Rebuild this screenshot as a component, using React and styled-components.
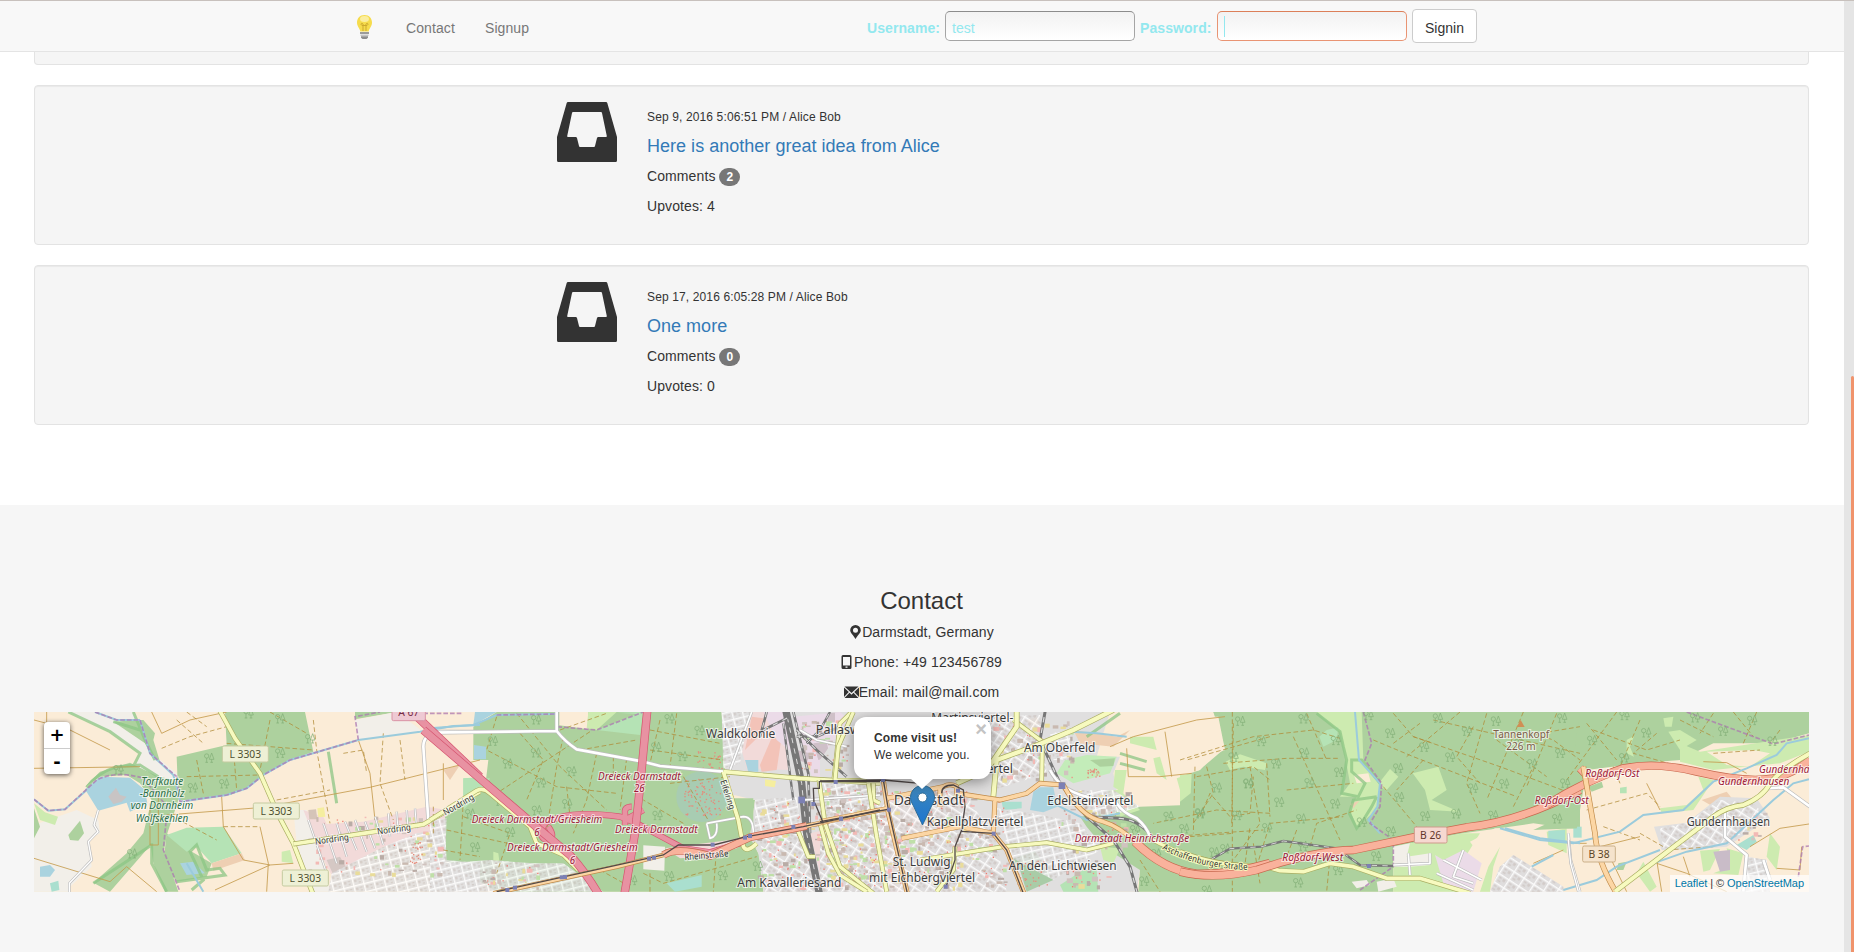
import React from 'react';
import styled, { createGlobalStyle, css } from 'styled-components';

const sans = '"Liberation Sans", Arial, sans-serif';

const GlobalStyle = createGlobalStyle`
  *, *::before, *::after { box-sizing: border-box; }
  body { margin: 0; overflow: hidden; background: #fff; }
  p, h3, h4 { margin: 0; font-weight: 400; }
`;

const Window = styled.div`
  display: flex;
  height: 952px;
  border-top: 1px solid #c8c1bd;
  font: 14px/20px ${sans};
  color: #333;
  overflow: hidden;
`;
const Page = styled.div`
  flex: 1;
  min-width: 0;
  display: flex;
  flex-direction: column;
`;
const ScrollTrack = styled.div`
  width: 10px;
  background: #e5e5e5;
  display: flex;
  flex-direction: column;
  align-items: flex-end;
  justify-content: flex-end;
`;
const ScrollThumb = styled.div`
  width: 3px;
  height: 576px;
  border-radius: 2px 2px 0 0;
  background: #f0936c;
`;

const Navbar = styled.nav`
  height: 51px;
  flex: none;
  background: #f8f8f8;
  border-bottom: 1px solid #e4e4e4;
  display: flex;
  align-items: center;
  padding: 0 367px 0 355px;
`;
const Brand = styled.a`
  display: flex;
  width: 36px;
  padding-top: 3px;
`;
const NavLink = styled.a`
  padding: 3px 15px 0;
  color: #777;
  letter-spacing: 0.1px;
`;
const LoginForm = styled.form`
  margin-left: auto;
  display: flex;
  align-items: center;
`;
const FieldLabel = styled.label`
  width: ${p => p.$width}px;
  padding-top: 3px;
  font-weight: 700;
  letter-spacing: 0.08px;
  color: #93e8ef;
  white-space: nowrap;
`;
const Field = styled.div`
  width: 190px;
  height: 30px;
  margin-right: 5px;
  padding: 6px 6px 0;
  border: 1px solid ${p => (p.$focused ? '#e99473' : '#a5a5a5')};
  border-top-color: ${p => (p.$focused ? '#dc7f59' : '#8c8c8c')};
  border-radius: 5px;
  background: linear-gradient(#f2f2f2, #fff);
  color: #93e8ef;
`;
const Caret = styled.span`
  display: block;
  width: 1px;
  height: 21px;
  margin-top: -2px;
  background: #93e8ef;
`;
const SubmitButton = styled.button`
  width: 65px;
  height: 34px;
  padding: 3px 0 0;
  border: 1px solid #ccc;
  border-radius: 4px;
  background: #fff;
  font: 14px/20px ${sans};
  color: #333;
`;

const Ideas = styled.main`
  height: 453px;
  flex: none;
  padding: 0 35px 0 34px;
`;
const Well = styled.article`
  height: 160px;
  margin-bottom: 20px;
  padding: 16px 19px 0 522px;
  display: flex;
  gap: 30px;
  background: #f5f5f5;
  border: 1px solid #e3e3e3;
  border-radius: 4px;
  box-shadow: inset 0 1px 1px rgba(0, 0, 0, 0.05);
  ${p => p.$cut && css`
    height: 13px;
    padding: 0;
    border-top: 0;
    border-radius: 0 0 4px 4px;
    box-shadow: none;
  `}
`;
const IdeaBody = styled.div`
  display: flex;
  flex-direction: column;
  gap: 10px;
  padding-top: 5px;
  letter-spacing: 0.1px;
`;
const Meta = styled.p`
  font-size: 12px;
  letter-spacing: 0.13px;
`;
const IdeaTitle = styled.h4`
  font-size: 18px;
  line-height: 20px;
  margin-top: -1px;
  letter-spacing: 0.02px;
  color: #337ab7;
`;
const Badge = styled.span`
  display: inline-block;
  min-width: 10px;
  padding: 3px 7px;
  border-radius: 10px;
  background: #777;
  color: #fff;
  font-size: 12px;
  line-height: 12px;
  font-weight: 700;
  vertical-align: middle;
`;

const ContactSection = styled.section`
  flex: 1;
  padding: 83px 35px 0 34px;
  background: #f6f6f6;
  text-align: center;
`;
const ContactTitle = styled.h3`
  font-size: 24px;
  line-height: 26px;
  margin-bottom: 8px;
`;
const ContactLine = styled.p`
  display: flex;
  justify-content: center;
  align-items: center;
  height: 20px;
  margin-bottom: 10px;
  letter-spacing: 0.1px;
  svg { margin-top: -1px; }
`;

const MapFrame = styled.div`
  position: relative;
  height: 180px;
  overflow: hidden;
  background: #fbecd7;
  text-align: left;
`;
const MapDrawing = styled.svg`
  display: block;
  font-family: "Noto Sans", sans-serif;
`;
const ZoomControl = styled.div`
  position: absolute;
  left: 10px;
  top: 10px;
  border-radius: 4px;
  background: #fff;
  box-shadow: 0 1px 5px rgba(0, 0, 0, 0.65);
`;
const ZoomButton = styled.div`
  width: 26px;
  height: 26px;
  font: bold 18px/25px "DejaVu Sans", sans-serif;
  text-align: center;
  color: #000;
  & + & { border-top: 1px solid #ccc; }
`;
const Popup = styled.div`
  position: absolute;
  left: 820px;
  top: 5px;
  width: 137px;
  height: 62px;
  padding: 13px 20px;
  border-radius: 12px;
  background: #fff;
  box-shadow: 0 3px 14px rgba(0, 0, 0, 0.4);
  font-size: 12px;
  line-height: 17px;
  letter-spacing: 0.08px;
  white-space: nowrap;
  &::after {
    content: '';
    position: absolute;
    left: 56px;
    top: 61px;
    border: 12px solid transparent;
    border-top: 11px solid #fff;
    border-bottom: 0;
  }
`;
const PopupClose = styled.span`
  position: absolute;
  right: 4px;
  top: 5px;
  font: bold 20px/14px "Liberation Sans", sans-serif;
  color: #c3c3c3;
`;
const MarkerPin = styled.svg`
  position: absolute;
  left: 876px;
  top: 73px;
`;
const Attribution = styled.div`
  position: absolute;
  right: 0;
  bottom: 0;
  height: 17px;
  padding: 0 5px;
  background: rgba(255, 255, 255, 0.7);
  font-size: 11px;
  line-height: 17px;
  letter-spacing: -0.06px;
  white-space: nowrap;
  a { color: #0078a8; }
`;

const Bulb = () => (
  <svg width="22" height="27" viewBox="0 0 22 27">
    <path d="M9.500 1C4.700 1 2 4.500 2 8.500c0 4 2.700 5.500 3.300 9h8.400c.6-3.500 3.300-5 3.300-9C17 4.500 14.300 1 9.500 1z" fill="#f6dc4d" />
    <ellipse cx="9.500" cy="5" rx="4.500" ry="3" fill="#fbeea0" />
    <path d="M8 17V11.500m3 5.500v-5.500M8 11.500c-3 0-2-3-.5-2 1 .8.500 2 .5 2h3s-.5-1.200.5-2c1.500-1 2.500 2-.5 2" fill="none" stroke="#cda92e" strokeWidth="1" />
    <path d="M5 18h9v2H5z" fill="#9b9b9b" />
    <path d="M5.500 20.500h8v1.500h-8z" fill="#c4c4c4" />
    <path d="M6 22.300h7v1.400l-1.500 1.200h-4L6 23.700z" fill="#8d8d8d" />
  </svg>
);
const Inbox = () => (
  <svg width="60" height="60" viewBox="0 0 60 60">
    <path fillRule="evenodd" fill="#333" d="M11 0H49Q50 0 50.300 1L60 35V58.500Q60 60 58.500 60H1.500Q0 60 0 58.500V35L9.700 1Q10 0 11 0zM16 10Q15.200 10 15 11L10.200 34Q10 35 11 35H18.500Q19.800 35 20 36L22 44Q22.200 45 23 45H37Q37.800 45 38 44L40 36Q40.200 35 41.500 35H49Q50 35 49.800 34L45 11Q44.800 10 44 10z" />
  </svg>
);
const PinIcon = () => (
  <svg width="13" height="14" viewBox="0 0 13 14"><path fillRule="evenodd" fill="#333" d="M6.500 0a5.300 5.300 0 0 1 5.300 5.300c0 3-3.300 5-5.300 8.700C4.500 10.300 1.200 8.300 1.200 5.300A5.300 5.300 0 0 1 6.500 0zm0 2.700a2.500 2.500 0 1 0 0 5 2.500 2.500 0 0 0 0-5z" /></svg>
);
const PhoneIcon = () => (
  <svg width="13" height="14" viewBox="0 0 13 14"><path fillRule="evenodd" fill="#333" d="M2 0h7q1.500 0 1.500 1.500v11Q10.500 14 9 14H2Q.5 14 .5 12.500v-11Q.5 0 2 0zm0 2v8.500h7V2zm2.500 9.500v1.300h2v-1.300z" /></svg>
);
const MailIcon = () => (
  <svg width="15" height="14" viewBox="0 0 15 14"><path fill="#333" d="M.5 1.500h14L7.500 8zM0 2.500l4.800 4.600L0 12zM15 2.500v9.500l-4.800-4.900zM.5 13l5-5.200 2 1.900 2-1.900 5 5.200z" /></svg>
);

/* The map is surveyed in five sheets drawn at three times the map scale. */
const sheets = { a: [-4, -12], b: [396, -12], c: [786, -152], d: [1146, -12], e: [1446, -12] };
const Sheet = ({ id, children }) => (
  <g transform={`translate(${sheets[id].join(' ')}) scale(.333333)`}>{children}</g>
);

const wood = '#add19e', meadow = '#cdebb0', built = '#e0dfdf', field = '#fbecd7', plain = '#f2efe9', water = '#aad3df', mint = '#b5e3b5', pink = '#f2dad9', lilac = '#ebdbe8', soil = '#eecfb3';
const areas = [
  ['a', plain, '110,36 310,36 380,170 440,220 450,300 420,330 330,250 320,190 330,160 240,95'],
  ['a', wood, '585,36 825,36 850,155 780,180 700,225 650,265 600,285 470,300 445,300 440,170 590,135'],
  ['a', wood, '250,65 320,60 340,60 375,100 370,120 390,185 375,180 345,130'],
  ['a', wood, '975,36 1100,36 975,58'],
  ['a', plain, '975,60 1100,36 1180,95 985,120'],
  ['a', plain, '12,375 140,330 205,360 210,400 175,420 185,500 120,560 120,575 12,575'],
  ['a', wood, '165,260 210,215 300,188 385,230 440,240 445,300 412,400 402,450 445,575 405,575 370,490 362,435 240,575 190,548 290,460 340,400 365,300 330,250 290,225 210,230'],
  ['a', water, '165,268 210,230 300,233 345,270 352,310 300,335 290,308 205,332'],
  ['a', '#c8c4c4', '235,290 245,278 258,263 270,285 290,290 275,305 250,312'],
  ['a', meadow, '12,310 45,337 84,350 75,375 30,360'],
  ['a', wood, '115,405 150,362 162,400 145,422 120,420'],
  ['a', wood, '12,325 30,380 12,415'],
  ['a', water, '30,500 60,495 75,510 60,530 30,530'],
  ['a', '#aadfcf', '60,550 85,542 88,570 65,575'],
  ['a', wood, '410,400 460,440 545,490 530,530 440,545 400,490'],
  ['a', mint, '410,405 470,383 580,380 635,460 545,490 500,440 470,455'],
  ['a', soil, '545,490 635,460 645,480 550,512'],
  ['a', water, '450,490 490,485 525,520 470,525'],
  ['a', plain, '790,330 830,330 880,480 900,575 850,575 800,430'],
  ['a', meadow, '755,455 780,450 790,490 755,485'],
  ['a', pink, '820,330 880,350 890,372 1000,365 1190,320 1250,330 1240,400 1060,440 905,525 880,480'],
  ['a', '#d5c4b8', '835,330 858,328 862,358 838,358'],
  ['a', '#f5ee9f', '862,325 882,322 886,350 865,352'],
  ['a', '#d5c8c4', '890,480 930,470 950,505 910,525'],
  ['a', mint, '1300,235 1350,232 1350,270 1300,300'],
  ['a', wood, '1240,400 1260,360 1350,300 1350,478 1250,485'],
  ['a', soil, '1240,210 1290,195 1260,240'],
  ['b', wood, '45,350 165,265 175,180 130,180 130,80 200,36 470,36 640,36 875,36 885,215 905,300 975,300 960,410 990,470 1000,575 200,575 45,480'],
  ['b', water, '135,36 200,36 130,75'], ['b', water, '132,135 168,140 168,178 132,178'],
  ['b', mint, '100,235 180,235 165,265 100,330'],
  ['b', field, '388,36 475,36 475,88 388,76'], ['b', meadow, '475,36 560,36 500,90 470,85'], ['b', mint, '560,38 640,36 630,105 500,90 620,42'],
  ['b', built, '875,36 1350,36 1350,575 1000,575 985,460 960,410 975,300 890,280'],
  ['b', wood, '905,295 970,295 970,370 925,360'],
  ['b', pink, '965,36 1060,36 1080,210 950,205 935,150'],
  ['b', '#f3c3b8', '965,50 1000,55 985,110 945,150'],
  ['b', '#f3c3b8', '990,195 1035,90 1055,110 1040,210 995,215'],
  ['b', lilac, '1090,50 1230,36 1270,70 1270,230 1150,240 1120,160'],
  ['b', lilac, '1000,36 1070,36 1090,160 1040,120'],
  ['b', '#cfc0c8', '1150,130 1190,125 1200,170 1165,180'], ['b', '#cfc0c8', '1190,40 1215,38 1215,65 1195,70'], ['b', '#cfc0c8', '1100,150 1140,160 1130,190 1105,180'],
  ['b', water, '945,180 985,180 985,215 955,215'],
  ['b', '#f5ee9f', '1005,238 1038,243 1034,262 1005,258'],
  ['b', pink, '1140,400 1350,350 1350,420 1230,500 1170,520'],
  ['b', pink, '705,445 900,420 980,400 920,445 830,470 750,475'],
  ['b', plain, '640,436 705,440 703,512 640,508'],
  ['b', '#aadfcf', '710,550 815,525 815,560 735,575'],
  ['b', meadow, '190,455 205,460 210,500 238,510 232,530 190,515'],
  ['c', built, '100,456 870,456 900,590 960,740 830,780 900,860 960,930 950,995 0,995 0,600'],
  ['c', pink, '0,790 200,755 250,995 180,995 160,800 30,830'],
  ['c', pink, '200,700 420,690 410,800 250,830'],
  ['c', '#d9cfcd', '330,700 430,690 425,780 320,780'],
  ['c', field, '870,456 1180,456 1215,560 1140,640 1000,740 900,740 880,640 900,590 830,590 850,520'],
  ['c', soil, '760,510 890,530 930,510 880,560 780,550'],
  ['c', soil, '620,480 650,470 660,490 630,510'],
  ['c', '#c3ecb9', '735,600 800,585 890,590 870,640 760,670 710,640'],
  ['c', wood, '810,600 885,595 880,618 840,620'],
  ['c', meadow, '885,630 920,630 910,700 880,680'], ['c', meadow, '1000,595 1020,590 1040,660 1010,640'],
  ['c', meadow, '930,530 1000,530 1010,570 930,550'],
  ['c', wood, '1180,456 1350,456 1350,995 955,995 960,930 850,860 800,800 780,770 960,740 1100,735 1120,650 1150,620 1215,565'],
  ['c', meadow, '860,690 900,690 960,750 900,770'],
  ['c', meadow, '840,860 900,865 880,910 850,900'],
  ['c', '#aadfcf', '545,725 605,725 605,745 550,750'],
  ['c', '#a9cca7', '580,895 645,873 700,960 620,995 600,930'],
  ['c', mint, '720,975 790,930 830,930 835,995 730,995'],
  ['c', meadow, '1070,655 1115,640 1115,700 1090,725'],
  ['c', meadow, '1215,590 1340,610 1320,630 1240,620'],
  ['d', wood, '100,36 1200,36 1200,390 1060,370 850,400 640,440 640,575 0,575 0,230 60,210 135,150 115,50'],
  ['d', field, '0,50 115,50 135,150 95,165 60,210 0,225'],
  ['d', meadow, '0,225 35,222 32,280 0,305'],
  ['d', meadow, '410,36 545,36 550,180 600,250 590,330 530,380 510,330 530,290 480,290 510,250 490,140 480,95'],
  ['d', mint, '418,110 440,90 475,82 470,120 430,140'],
  ['d', meadow, '137,185 180,163 260,190 255,210 190,200 150,210'],
  ['d', meadow, '603,262 600,245 630,207 655,230 620,270'],
  ['d', meadow, '698,220 775,200 800,270 755,300 838,335 750,330 735,270'],
  ['d', field, '522,225 565,220 572,245 530,250'], ['d', soil, '510,312 538,302 520,325'],
  ['d', meadow, '640,440 850,400 900,400 850,480 870,575 640,575'],
  ['d', plain, '640,440 690,430 680,470 750,460 750,495 690,500 640,500'],
  ['d', plain, '515,545 560,540 570,555 530,565'], ['d', plain, '590,545 640,535 650,560 595,575'],
  ['d', lilac, '765,465 790,480 850,450 905,490 880,575 840,575 790,550'],
  ['d', field, '870,425 945,385 1200,385 1200,575 900,575 925,500'],
  ['d', meadow, '925,500 960,440 940,500 930,575 900,575'],
  ['d', built, '960,500 1000,465 1150,560 1150,575 930,575'],
  ['d', meadow, '1105,435 1100,395 1160,385 1160,460'],
  ['d', '#aadfcf', '1105,392 1155,390 1155,425 1105,420'], ['d', '#aadfcf', '1180,380 1205,380 1205,413 1180,413'],
  ['e', wood, '300,36 987,36 987,100 880,130 700,130 600,180 480,190 320,210 300,330 290,385 250,385'],
  ['e', wood, '160,390 300,325 290,385'],
  ['e', meadow, '600,130 660,155 987,105 987,155 900,190 700,210 600,185'],
  ['e', meadow, '550,55 580,50 575,80 555,80'], ['e', meadow, '440,120 462,108 450,140 462,170 440,160'],
  ['e', meadow, '565,95 600,90 650,120 600,150'],
  ['e', field, '680,155 820,150 870,160 810,200 740,195'],
  ['e', meadow, '655,230 700,240 640,330 545,340 540,325 620,315 670,270'],
  ['e', wood, '325,260 365,245 370,262 335,275'], ['e', mint, '420,263 440,260 440,280 420,280'],
  ['e', soil, '665,300 740,275 760,300 700,320'],
  ['e', built, '522,380 620,368 720,290 830,295 870,355 740,440 640,448 545,450'],
  ['e', built, '800,470 860,480 870,575 780,575'],
  ['e', meadow, '660,452 720,447 690,510 670,515'],
  ['e', meadow, '740,445 790,460 775,525 700,520 750,500'], ['e', meadow, '870,400 900,440 890,510 860,470'],
  ['e', '#c9bcc8', '700,455 750,450 750,510 720,515'],
  ['e', '#aadfcf', '770,435 820,405 830,425 800,450'],
  ['e', wood, '415,490 440,485 430,510 410,510'],
  ['e', meadow, '470,520 490,485 530,560 510,575'],
];

const streetZones = [
  ['a', 'url(#blocks)', '905,520 1060,440 1160,400 1245,390 1250,480 1350,490 1350,575 895,575'],
  ['b', 'url(#blocks)', '0,360 50,355 45,490 180,480 310,490 400,490 520,575 0,575'],
  ['b', 'url(#blocks)', '875,36 960,36 930,190 880,205'],
  ['b', 'url(#blocks)', '975,300 1100,290 1110,370 975,395'],
  ['b', 'url(#blocks2)', '990,410 1120,390 1170,575 1005,575'],
  ['b', 'url(#blocks)', '1170,250 1350,250 1350,575 1190,575'],
  ['c', 'url(#blocks2)', '510,470 660,465 680,640 520,690 515,600'],
  ['c', 'url(#blocks)', '690,520 760,510 750,600 700,600'],
  ['c', 'url(#blocks2)', '0,760 430,690 530,850 560,995 0,995'],
  ['c', 'url(#blocks)', '530,745 640,760 780,790 840,870 700,960 570,890'],
  ['c', 'url(#blocks)', '750,690 880,690 960,740 830,780'],
  ['d', 'url(#blocks2)', '960,500 1000,465 1150,560 1150,575 930,575'],
  ['e', 'url(#blocks2)', '540,385 620,368 720,300 820,310 860,350 740,430 640,440 550,445'],
  ['e', 'url(#blocks)', '800,470 860,480 870,575 780,575'],
];

const styles = {
  motorway: ['#d6546f', '#e892a2'], trunk: ['#c8694f', '#f9b29c'], primary: ['#c08b4a', '#fcd6a4'], secondary: ['#a9ad62', '#f7fabf'], minor: ['#bdbdbd', '#ffffff'],
};
const roads = [
  ['a', 'minor', 9, 'M1350 95H1230Q1180 100 1180 140L1195 360'], ['a', 'minor', 5, 'M205 330L192 375L204 395L175 425L185 480L118 550V580'],
  ['a', 'minor', 4, 'M835 360L890 520M880 370L920 490M920 370L950 470M945 365L980 450M975 360L1010 455M1005 365L1035 445M1035 350L1060 435M1075 340L1080 410M1100 335L1105 400M1130 330L1135 395M1155 325L1160 385'],
  ['b', 'minor', 9, 'M0 98L380 93Q405 125 440 148L640 185L690 198L880 215M380 93V36'],
  ['b', 'minor', 6, 'M830 370L940 350Q970 350 970 400M830 370L840 415Q865 410 860 370M965 36L900 210M1110 90L1160 120L1250 140M1120 300L1350 285'],
  ['c', 'minor', 9, 'M690 630Q720 690 800 710L890 730Q910 760 950 775Q980 800 990 830'],
  ['d', 'minor', 6, 'M640 495L750 490V460M685 460L690 525M1165 400L1172 480L1200 575M790 480L905 540M770 520L880 570M850 450L820 530L880 550'],
  ['e', 'minor', 9, 'M860 265L910 262L990 320M735 330L735 410L800 465L790 575M850 480L870 540'],
  ['e', 'minor', 5, 'M265 420L272 490L295 575'],
  ['a', 'secondary', 12, 'M565 24L615 115L690 220L745 345L790 430L850 585'], ['a', 'secondary', 12, 'M790 432L1000 400L1180 373L1350 275'],
  ['b', 'secondary', 12, 'M0 360L140 272Q160 262 180 280L300 380L320 430L400 465L445 510'],
  ['b', 'secondary', 12, 'M880 215L1110 235L1350 250M880 215L925 360L940 440Q950 460 980 430'],
  ['b', 'secondary', 11, 'M1265 36L1230 70L1212 235M1167 240L1185 370L1230 500L1330 580M1105 395L1135 470L1155 470M1330 250V300L1350 310'],
  ['c', 'secondary', 11, 'M300 900L550 860L680 848L800 870L880 850M665 665L667 545L580 480M145 670L170 830L200 995M0 790L25 880L60 945L140 995M100 456L55 560L45 660L140 662M405 860L400 930L350 995'],
  ['c', 'secondary', 14, 'M520 710L530 600L640 560L760 510L880 450M410 670L500 630L590 500L590 456'],
  ['c', 'secondary', 10, 'M990 835Q1050 870 1120 890Q1230 920 1350 920'],
  ['d', 'secondary', 12, 'M0 455Q130 505 240 495L300 512L370 515L450 490L520 500L620 535L720 535L870 580'],
  ['a', 'motorway', 22, 'M1140 30L1350 230'],
  ['b', 'motorway', 16, 'M330 380Q400 325 570 350L620 370L760 445L840 457L930 430M640 330L585 360M585 375V340Q582 320 605 320M345 370Q320 410 350 420Q380 415 355 380'],
  ['b', 'trunk', 20, 'M700 465Q740 440 840 468L960 412L1130 378'],
  ['b', 'motorway', 22, 'M-20 90L330 390L420 465Q470 520 510 590'], ['b', 'motorway', 22, 'M652 30L630 260L615 400L582 590'],
  ['b', 'primary', 11, 'M190 580L560 500L700 465M1130 378L1350 330'],
  ['c', 'primary', 12, 'M0 785L205 745M190 660L205 760L262 1000M200 715L370 680Q390 668 410 680V700L540 720L620 700L660 670L730 675Q780 770 850 785Q900 800 950 850M525 715L520 820L560 870L612 1000M245 835L420 800L520 820M360 680V740'],
  ['c', 'trunk', 24, 'M945 845Q1030 930 1130 942Q1230 945 1350 910'],
  ['d', 'trunk', 22, 'M0 515Q100 540 230 510L300 488Q430 452 520 450L700 412L860 382Q1020 365 1200 270'],
  ['e', 'trunk', 22, 'M200 315Q320 240 430 205Q530 185 650 215Q800 250 880 235Q940 220 990 180M320 225L300 205'],
  ['e', 'primary', 14, 'M310 200L345 400Q350 480 410 580'],
  ['e', 'secondary', 13, 'M405 575L700 350Q740 320 790 315Q850 290 870 250Q900 210 990 160'],
];

const streams = [
  ['a', 'M12 298L55 332L105 328L170 270M330 60L360 160L430 225L450 300M450 305L590 285L650 265L700 225L780 180L985 120L1170 95L1270 78L1350 75M470 490L520 575M195 36L260 60L330 60'],
  ['b', 'M0 85L130 75L200 45L380 42'],
  ['d', 'M525 36L537 180L600 250L592 320L565 360L600 400M975 385L1080 415L1200 430M1055 500L1120 465'],
  ['e', 'M60 385L180 420L280 430L420 395L490 345L610 330L700 245L800 205L890 165L920 130L987 115M250 570L350 540L410 500L540 450M520 490L620 455L740 430L880 300L940 250L987 238'],
  ['c', 'M755 515L830 520L920 530M700 730L800 780L900 760'],
];
const hedges = [
  ['a', 'M115 36L240 95L330 160L312 195M310 36L345 120L375 180M250 65L330 90M170 262Q200 220 260 200L330 195L385 230M365 430V490L410 575M190 550L365 435M440 545L585 525L570 505L530 510L500 435L480 455L520 540L485 570M895 155L920 310'],
  ['c', 'M900 580L980 605M900 610L975 630M800 530L900 460'],
  ['d', 'M410 40L480 95L490 140L500 180L485 280L535 290L555 250L515 215V180H545L600 250M590 290L520 300L508 340L530 385L550 360L575 320L590 290'],
];
const farmTracks = [
  ['a', 'M12 205L330 200M50 36V70L12 60M365 36L395 100L480 60L590 36M12 475L240 545L290 500L380 575M575 290L580 380L640 480L720 495L790 490M410 345L700 322L1020 262L1350 180M985 120L1020 220L1035 360M1240 190V300M555 570L720 495M690 380L715 490L710 575M110 85L240 150M360 310V435H385V290'],
  ['c', 'M870 560L940 530L1130 480L1215 470M1035 515L1055 650M920 565L925 650L1020 650L1115 640'],
  ['e', 'M500 250L540 330M280 430H320M530 490L620 520L740 575M320 450L480 410M610 470L630 530M810 440L900 385L987 372M670 185L740 188L800 220M160 490L250 450M380 450L440 575M890 505L960 510L965 440M530 480L545 575'],
];
const paths = [
  ['a', 'M395 145L480 110L590 80M440 60L520 130M470 36L530 80M590 130L850 150M470 230L690 225M500 180L520 280M610 140L620 270M720 60L690 210M720 36L830 100M850 60L860 150L900 370M1060 100L1050 250L1090 360M1110 120L1125 240M740 300L900 270M940 160L1000 150L1010 220M420 345L560 420M580 380L690 380M1210 320V400'],
  ['b', 'M260 40L390 200L530 330M480 95L200 280M200 50L170 150L380 260L560 280M400 110L380 200L350 390M500 160L470 300L430 400M590 175L570 330M270 100L340 180L290 300M100 350L240 400L200 520M50 390L280 440M100 300L90 480M390 90L530 40M690 60L660 190M740 40L720 200M660 90L870 130M660 150L880 180M760 230L840 370M760 370L640 300M720 250L900 230M640 520L700 550L980 470M860 440L850 575M660 575L660 520M550 170L550 240M450 150L620 120M510 510L600 560M410 260L420 350M40 450L150 470'],
  ['d', 'M157 36V575M0 180L220 110L400 90L480 115M45 200L40 400M130 190L320 175H480M60 350L90 280L150 350L210 340L220 230M260 190L270 350M340 110L480 420M380 40L440 180M320 270L520 250M230 500L270 370L490 350M390 440L410 370L530 330M30 410L160 400M640 130L720 70M580 120L700 170L1010 290M640 40L700 110L760 130M840 36L680 170M880 80L830 170L900 250M920 40L860 250L900 340M1030 36L920 300M1130 40L1040 260M700 110L960 200L1200 290M760 60L1200 160M610 260L710 380M730 180L650 270M1000 320L1060 200M1060 100L1120 120L1200 180M220 430L240 550M450 470L440 575M350 390L320 470M1080 100L1200 80M950 120L1100 230'],
  ['e', 'M320 70L410 180M410 36L260 240M480 60L420 200M530 100L460 160L600 200M340 90L500 150L600 120M600 60L700 110M700 40L660 100M830 36L790 130M760 36L820 110M330 220L490 200M400 200L420 250M320 330L500 280L540 320M900 90L870 130M700 160L840 150M560 450L700 440M480 400L550 440M370 380L480 420'],
  ['c', 'M1240 490L1235 800M1350 530L1100 600M1130 650L1300 620L1350 660M1160 620L1180 700L1120 790M1290 620L1320 790L1240 900M1350 760L1190 750L1000 790M1270 950L1290 800M1060 830L1180 820L1330 810M960 900L1020 995'],
];
const rails = [
  ['b', 22, 'M1065 20L1115 250L1130 400L1170 590'], ['b', 8, 'M1090 36L1135 220L1140 400M1000 90L1080 50M1100 90L1160 150L1250 230M1010 36L990 110M1100 110L1160 110L1230 80'],
  ['b', 7, 'M1060 70L1090 300M1130 130L1170 90L1200 36'],
  ['c', 9, 'M678 440L660 540L720 670L800 770L880 840L930 920L952 1000M800 770L900 775Q960 780 1000 835'],
  ['d', 7, 'M60 480H90L150 446L245 440L310 423L470 445L540 495L640 498'],
];
const tramLines = [
  ['b', 'M200 575L700 465L745 435L850 435L950 410L1120 380L1350 330M1155 310L1180 370M1152 310L1150 265L1168 265V245H1217L1350 245'],
  ['c', 'M0 785L205 748L262 1000M205 748L190 660L0 663M190 660L300 670M365 700Q365 675 400 675L430 690L435 740L425 810L405 860V900L378 980M425 814L520 820L560 870L610 1000M520 820'],
];
const borders = [
  ['a', 'M12 298L55 332L105 328L200 240Q260 210 340 235L420 330M195 36L260 60L330 60L360 160L440 230L450 305L590 285L650 265L700 225L780 180L985 120L975 50L1050 36M410 345L400 450L450 575M1100 40H1300'],
  ['b', 'M200 45L380 42V80L500 90L640 36'],
  ['d', 'M550 36L575 130L555 180L605 250L600 320L570 370L640 420V500L540 570'],
  ['e', 'M620 36L880 132L987 105M955 530L968 440L987 438'],
];
const trees = {
  a: [[750, 55], [750, 158], [537, 173], [582, 250], [488, 262], [306, 460], [265, 208], [1335, 440], [840, 115], [1320, 340], [655, 40]],
  b: [[318, 58], [188, 122], [317, 157], [233, 190], [424, 213], [333, 247], [210, 302], [411, 310], [320, 330], [678, 140], [718, 55], [808, 90], [757, 168], [682, 345], [717, 527], [878, 525], [606, 540], [240, 395], [983, 497]],
  c: [[1285, 668], [1190, 682], [1140, 760], [1045, 768], [1092, 805], [945, 808], [1008, 880], [972, 962]],
  d: [[180, 62], [243, 123], [372, 157], [288, 190], [204, 250], [388, 247], [297, 305], [363, 355], [171, 345], [60, 337], [261, 382], [102, 455], [135, 445], [369, 437], [354, 547], [80, 570], [370, 55], [467, 120], [477, 215], [465, 310], [630, 98], [565, 45], [732, 140], [773, 53], [654, 203], [657, 290], [735, 347], [632, 393], [588, 467], [860, 92], [947, 62], [810, 170], [828, 340], [879, 263], [939, 345], [972, 250], [1056, 190], [1140, 158], [1146, 53], [1131, 355], [1155, 248], [1017, 130], [474, 510], [545, 365], [160, 170]],
  e: [[336, 120], [498, 97], [432, 172], [433, 45], [816, 60], [729, 92], [645, 52], [877, 122]],
};
const stations = {
  b: [[232, 570], [255, 563], [395, 532], [405, 531], [657, 476], [672, 473], [848, 434], [945, 413], [960, 408], [1090, 381], [1115, 300, 20], [1150, 312], [1217, 246], [1233, 356]],
  c: [[189, 660], [207, 749], [63, 776], [414, 692], [521, 821], [726, 677, 20], [377, 980]],
  d: [[567, 498]],
};
/* sheet, text, centre x, baseline y, width, size, colour, italic, rotation */
const town = '#3c3c3c', exit = '#9d1a38';
const labels = [
  ['a', 'Torfkaute', 397, 254, 126, 10, '#2c7048', 1], ['a', '-Bannholz', 396, 291, 134, 10, '#2c7048', 1],
  ['a', 'von Dornheim', 396, 328, 188, 10, '#2c7048', 1], ['a', 'Wolfskehlen', 396, 365, 157, 10, '#2c7048', 1],
  ['a', 'Nordring', 907, 427, 102, 9, '#333', 0, -8], ['a', 'Nordring', 1093, 397, 102, 9, '#333', 0, -7], ['a', 'Nordring', 1290, 322, 102, 9, '#333', 0, -30],
  ['b', 'Dreieck Darmstadt', 628, 239, 248, 10, exit, 1], ['b', '26', 628, 276, 32, 10, exit, 1],
  ['b', 'Dreieck Darmstadt/Griesheim', 321, 370, 392, 10, exit, 1], ['b', '6', 321, 407, 16, 10, exit, 1],
  ['b', 'Dreieck Darmstadt', 679, 398, 248, 10, exit, 1],
  ['b', 'Dreieck Darmstadt/Griesheim', 427, 454, 392, 10, exit, 1], ['b', '6', 427, 491, 16, 10, exit, 1],
  ['b', 'Rheinstraße', 830, 475, 132, 9, '#333', 0, -5], ['b', 'Eifelring', 885, 287, 92, 8.500, '#333', 0, 72],
  ['b', 'Waldkolonie', 932, 114, 208, 12, town], ['b', 'Am Kavalleriesand', 1078, 562, 312, 12, town], ['b', 'Pallaswiesen', 1270, 101, 225, 12, town],
  ['c', 'Martinsviertel-', 457, 487, 246, 12, town], ['c', 'Johannesviertel', 445, 640, 268, 12, town],
  ['c', 'Am Oberfeld', 719, 576, 214, 12, town], ['c', 'Darmstadt', 326, 735, 210, 13.500, town], ['c', 'Kapellplatzviertel', 465, 797, 290, 12, town],
  ['c', 'Edelsteinviertel', 811, 736, 258, 12, town], ['c', 'St. Ludwig', 305, 918, 174, 12, town], ['c', 'mit Eichbergviertel', 306, 965, 318, 12, town],
  ['c', 'An den Lichtwiesen', 728, 929, 324, 12, town], ['c', 'Darmstadt Heinrichstraße', 936, 847, 344, 10, exit, 1],
  ['d', 'Roßdorf-West', 398, 484, 182, 10, exit, 1], ['d', 'Tannenkopf', 1024, 113, 168, 10, '#7c5d49'], ['d', '226 m', 1023, 150, 88, 10, '#7c5d49'],
  ['e', 'Roßdorf-Ost', 397, 230, 162, 10, exit, 1], ['e', 'Roßdorf-Ost', 245, 313, 162, 10, exit, 1],
  ['e', 'Gundernhausen', 944, 219, 214, 10, exit, 1], ['e', 'Gundernhausen', 821, 255, 214, 10, exit, 1], ['e', 'Gundernhausen', 745, 379, 250, 12, town],
];
const shields = [
  ['a', 'L 3303', 646, 162, 138, '#eef0d5', '#c5cba0', '#4e5030'], ['a', 'L 3303', 739, 333, 138, '#eef0d5', '#c5cba0', '#4e5030'], ['a', 'L 3303', 826, 534, 138, '#eef0d5', '#c5cba0', '#4e5030'],
  ['a', 'A 67', 1136, 38, 100, '#eec9d3', '#da94a5', '#742c45'], ['d', 'B 26', 752, 405, 98, '#f6d8d0', '#cf9a8b', '#62352a'], ['e', 'B 38', 357, 462, 98, '#f5e3cc', '#cbb08a', '#5c4526'],
];
let seed = 11;
const rand = () => { seed = (seed * 16807) % 2147483647; return seed / 2147483647; };
const tints = ['#c9b9b0', '#ee7b72', '#e9dc9a', '#bfe0a8', '#ee8d84', '#d0c3bf', '#f3b9b5', '#b9aca6'];
const zones = [
  ['a', 830, 350, 400, 170, 90], ['b', 980, 300, 360, 260, 210], ['b', 150, 485, 180, 80, 30], ['b', 1100, 60, 150, 150, 50],
  ['c', 0, 680, 560, 300, 370], ['c', 520, 480, 240, 180, 75], ['c', 700, 690, 220, 180, 75], ['c', 590, 900, 90, 80, 40, 1], ['c', 730, 900, 130, 80, 30],
  ['b', 760, 235, 110, 110, 75, 1], ['a', 1140, 420, 35, 70, 25, 1], ['e', 760, 330, 100, 90, 20],
  ['b', 800, 150, 75, 55, 25, 1], ['c', 800, 625, 40, 30, 22, 1],
];
const specks = zones.map(([id, x, y, w, h, n, dotsOnly]) => [id, Array.from({ length: n }, () => {
  const color = dotsOnly ? '#e58c7c' : tints[Math.floor(rand() * tints.length)];
  const dot = dotsOnly || color.startsWith('#ee');
  return [x + rand() * w, y + rand() * h, dot ? 4 : 5 + rand() * 14, dot ? 4 : 4 + rand() * 11, color];
})]);

const Lines = ({ data, ...rest }) => data.map(([id, d], i) => (
  <Sheet id={id} key={i}><path d={d} fill="none" {...rest} /></Sheet>
));

const TownMap = () => (
  <MapDrawing width="1775" height="180" viewBox="0 0 1775 180">
    <defs>
      <pattern id="blocks" width="31" height="25" patternUnits="userSpaceOnUse" patternTransform="rotate(-14)">
        <path d="M0 0H31V25H0z" fill="#e0dfdf" /><path d="M6 8h7v8H6zM18 8h8v4h-8zM19 17h6v4h-6z" fill="#cfc8c5" /><path d="M0 2H31M2 0V25" stroke="#fff" strokeWidth="4" />
      </pattern>
      <pattern id="blocks2" width="35" height="29" patternUnits="userSpaceOnUse" patternTransform="rotate(33)">
        <path d="M0 0H35V29H0z" fill="#dfdddd" /><path d="M7 8h9v5H7zM21 8h8v9h-8zM8 19h10v5H8z" fill="#cfc7c4" /><path d="M0 2H35M2 0V29" stroke="#fff" strokeWidth="4" />
      </pattern>
      <g id="tree" fill="none" stroke="#84b078" strokeWidth="2.200">
        <circle cx="-7" cy="-5" r="6.500" /><path d="M-7 1V14M8 5V14M8 -14L1 5H15zM-11 14H-3M4 14H12" />
      </g>
    </defs>
    {areas.map(([id, fill, pts], i) => <Sheet id={id} key={i}><polygon points={pts} fill={fill} /></Sheet>)}
    {streetZones.map(([id, fill, pts], i) => <Sheet id={id} key={i}><polygon points={pts} fill={fill} opacity=".85" /></Sheet>)}
    <Sheet id="b"><circle cx="815" cy="290" r="76" fill="#a8ccb2" /></Sheet>
    {specks.map(([id, list], i) => (
      <Sheet id={id} key={i}>{list.map(([x, y, w, h, c], j) => <rect key={j} x={x} y={y} width={w} height={h} fill={c} />)}</Sheet>
    ))}
    <Sheet id="c"><polygon points="630,750 640,695 660,682 700,682 712,740 670,757" fill={water} /></Sheet>
    <Lines data={hedges} stroke="#8cc584" strokeWidth="9" opacity=".75" />
    <Lines data={farmTracks} stroke="#c49a4c" strokeWidth="2.500" />
    <Lines data={paths} stroke="#b08a35" strokeWidth="2.800" strokeDasharray="14 8" opacity=".8" />
    <Lines data={streams} stroke="#9bcbdc" strokeWidth="6" />
    <Lines data={borders} stroke="#ac78b0" strokeWidth="5" strokeDasharray="14 6" opacity=".75" />
    {Object.entries(trees).map(([id, list]) => (
      <Sheet id={id} key={id}>{list.map(([x, y], i) => <use key={i} href="#tree" x={x} y={y} />)}</Sheet>
    ))}
    {rails.map(([id, w, d], i) => (
      <Sheet id={id} key={i}><path d={d} fill="none" stroke="#777" strokeWidth={w} /><path d={d} fill="none" stroke="#ddd" strokeWidth={w > 10 ? 3 : w / 2.500} strokeDasharray="16 16" /></Sheet>
    ))}
    {roads.map(([id, kind, w, d], i) => (
      <Sheet id={id} key={i}>
        <path d={d} fill="none" stroke={styles[kind][0]} strokeWidth={w + 3} strokeLinejoin="round" />
        <path d={d} fill="none" stroke={styles[kind][1]} strokeWidth={w - 1} strokeLinejoin="round" />
      </Sheet>
    ))}
    <Lines data={tramLines} stroke="#514948" strokeWidth="4" />
    {Object.entries(stations).map(([id, list]) => (
      <Sheet id={id} key={id}>{list.map(([x, y, s = 12], i) => <rect key={i} x={x - s / 2} y={y - s / 2} width={s} height={s} fill="#7c80b4" />)}</Sheet>
    ))}
    <Sheet id="d"><path d="M1022 60L1034 81H1010z" fill="#d08f55" /></Sheet>
    {shields.map(([id, text, x, y, w, fill, line, ink], i) => {
      const cx = x / 3 + sheets[id][0], cy = y / 3 + sheets[id][1];
      return (
        <g key={i}>
          <rect x={cx - w / 6} y={cy - 8} width={w / 3} height="16" rx="1.500" fill={fill} stroke={line} />
          <text x={cx} y={cy + 3.700} fontSize="10.300" fill={ink} textAnchor="middle">{text}</text>
        </g>
      );
    })}
    {labels.map(([id, text, x, y, w, size, fill, italic, turn = 0], i) => {
      const cx = x / 3 + sheets[id][0], cy = y / 3 + sheets[id][1];
      return (
        <text key={i} x={cx} y={cy} textLength={w / 3} lengthAdjust="spacingAndGlyphs" fontSize={size} fill={fill} textAnchor="middle" fontStyle={italic ? 'italic' : 'normal'} transform={`rotate(${turn} ${cx} ${cy})`} stroke="#fff" strokeOpacity=".65" strokeWidth="2.200" paintOrder="stroke">{text}</text>
      );
    })}
    <text fontSize="9" fill="#333" stroke="#f7fabf" strokeWidth="2" paintOrder="stroke">
      <textPath href="#aschaffenburger" textLength="89" lengthAdjust="spacingAndGlyphs">Aschaffenburger Straße</textPath>
    </text>
    <path id="aschaffenburger" d="M1128 137Q1165 157 1216 158" fill="none" />
  </MapDrawing>
);

const Idea = ({ date, title, comments, votes }) => (
  <Well>
    <Inbox />
    <IdeaBody>
      <Meta>{date} / Alice Bob</Meta>
      <IdeaTitle>{title}</IdeaTitle>
      <p>Comments <Badge>{comments}</Badge></p>
      <p>Upvotes: {votes}</p>
    </IdeaBody>
  </Well>
);

export default function App() {
  return (
    <>
      <GlobalStyle />
      <Window>
        <Page>
          <Navbar>
            <Brand><Bulb /></Brand>
            <NavLink>Contact</NavLink>
            <NavLink>Signup</NavLink>
            <LoginForm>
              <FieldLabel $width={78}>Username:</FieldLabel>
              <Field>test</Field>
              <FieldLabel $width={77}>Password:</FieldLabel>
              <Field $focused><Caret /></Field>
              <SubmitButton type="button">Signin</SubmitButton>
            </LoginForm>
          </Navbar>
          <Ideas>
            <Well $cut />
            <Idea date="Sep 9, 2016 5:06:51 PM" title="Here is another great idea from Alice" comments={2} votes={4} />
            <Idea date="Sep 17, 2016 6:05:28 PM" title="One more" comments={0} votes={0} />
          </Ideas>
          <ContactSection>
            <ContactTitle>Contact</ContactTitle>
            <ContactLine><PinIcon />Darmstadt, Germany</ContactLine>
            <ContactLine><PhoneIcon />Phone: +49 123456789</ContactLine>
            <ContactLine><MailIcon />Email: mail@mail.com</ContactLine>
            <MapFrame>
              <TownMap />
              <MarkerPin width="25" height="41" viewBox="0 0 25 41">
                <defs><linearGradient id="pin" x1="0" y1="0" x2="0" y2="1"><stop offset="0" stopColor="#3f86b8" /><stop offset="1" stopColor="#1a76d2" /></linearGradient></defs>
                <path d="M12.500.5C5.500.5.5 6 .5 12.500c0 3 1.500 6 3 8.500l9 19 9-19c1.500-2.500 3-5.500 3-8.500C24.500 6 19.500.5 12.500.5z" fill="url(#pin)" stroke="#2e6c97" />
                <circle cx="12.500" cy="12.500" r="4.500" fill="#fff" stroke="#2e6c97" />
              </MarkerPin>
              <Popup>
                <PopupClose>×</PopupClose>
                <b>Come visit us!</b><br />We welcome you.
              </Popup>
              <ZoomControl><ZoomButton>+</ZoomButton><ZoomButton>-</ZoomButton></ZoomControl>
              <Attribution><a>Leaflet</a> | © <a>OpenStreetMap</a></Attribution>
            </MapFrame>
          </ContactSection>
        </Page>
        <ScrollTrack><ScrollThumb /></ScrollTrack>
      </Window>
    </>
  );
}
